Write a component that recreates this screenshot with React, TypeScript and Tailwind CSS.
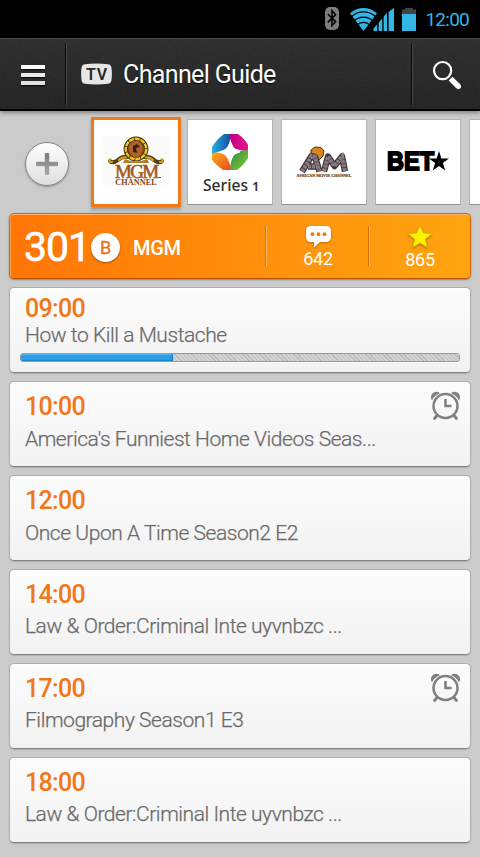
import type { ReactNode } from 'react'
import clsx from 'clsx'

type Program = {
  time: string
  title: string
  alarm?: boolean
  progress?: number
  raised?: boolean
}

const programs: Program[] = [
  { time: '09:00', title: 'How to Kill a Mustache', progress: 34.8 },
  { time: '10:00', title: "America's Funniest Home Videos Seas...", alarm: true },
  { time: '12:00', title: 'Once Upon A Time Season2 E2' },
  { time: '14:00', title: 'Law & Order:Criminal Inte uyvnbzc ...', raised: true },
  { time: '17:00', title: 'Filmography Season1 E3', alarm: true, raised: true },
  { time: '18:00', title: 'Law & Order:Criminal Inte uyvnbzc ...', raised: true },
]

function StatusBar() {
  return (
    <div className="flex h-[38px] shrink-0 items-start justify-end bg-black pr-[11px]">
      <svg className="mt-[7px] mr-[11px] h-[23px] w-[14px]" viewBox="0 0 14 23">
        <rect width="14" height="23" rx="5" fill="#7d7d7d" />
        <path d="M2.8 7 10.6 14.6 7 18.6V3.6L10.6 7.8 2.8 15.4" fill="none" stroke="#000" strokeWidth="1.5" />
      </svg>
      <svg className="mt-[7px] h-6 w-[45px]" viewBox="0 0 45 24" fill="#33b5e5">
        <path d="M13.5 24 0 6.2C8 -.9 19-.9 27 6.2Z" />
        <g fill="none" stroke="#000" strokeWidth="1.3">
          <path d="M1.5 9.6C8.5 3.4 18.5 3.4 25.5 9.6" />
          <path d="M4 13.8C9.5 8.8 17.5 8.8 23 13.8" />
          <path d="M6.8 18.2C10.5 14.4 16.5 14.4 20.2 18.2" />
        </g>
        <path d="M23.5 24v-2.4l3.6-4.1V24ZM28.6 24v-8.2l3.6-4.3V24ZM33.6 24V9.8l3.4-4V24ZM38.6 24V4.9L44 .8V24Z" />
      </svg>
      <svg className="mt-2 ml-[7px] h-[23px] w-[14px]" viewBox="0 0 14 23">
        <path d="M0 1.5h3V0h8v1.5h3V6H0Z" fill="#444" />
        <path d="M0 6h14v17H0Z" fill="#33b5e5" />
      </svg>
      <span className="mt-2 ml-[9px] text-[19px] leading-6 tracking-[-0.75px] text-[#33b5e5]">12:00</span>
    </div>
  )
}

function Header() {
  return (
    <header className="relative z-10 flex h-[73px] shrink-0 items-center border-t border-b-2 border-t-[#4a4a4a] border-b-black bg-gradient-to-b from-[#2b2b2b] to-[#202020] shadow-[0_2px_4px_rgba(0,0,0,0.35)]">
      <svg className="pointer-events-none absolute inset-0 h-full w-full opacity-[0.07]">
        <filter id="grain">
          <feTurbulence type="fractalNoise" baseFrequency="0.6" numOctaves="2" />
          <feColorMatrix type="saturate" values="0" />
        </filter>
        <rect width="100%" height="100%" filter="url(#grain)" />
      </svg>
      <div className="mt-0.5 flex w-[65px] flex-col gap-1 pl-[21px]">
        <span className="h-1 w-6 bg-white shadow-[0_1px_1px_#000]" />
        <span className="h-1 w-6 bg-[#ededed] shadow-[0_1px_1px_#000]" />
        <span className="h-1 w-6 bg-[#e2e2e2] shadow-[0_1px_1px_#000]" />
      </div>
      <div className="h-[62px] w-0.5 border-r border-[#454545] bg-black" />
      <svg className="ml-[14px] h-[22px] w-[31px]" viewBox="0 0 31 22">
        <path d="M4 1.2Q15.5-.4 27 1.2 30 1.6 30.4 4.5 31.4 11 30.4 17.5 30 20.4 27 20.8 15.5 22.4 4 20.8 1 20.4.6 17.5-.4 11 .6 4.5 1 1.6 4 1.2Z" fill="#e8e8e8" />
        <text x="15.9" y="16.6" textAnchor="middle" fontFamily="Roboto, sans-serif" fontSize="16" fontWeight="600" letterSpacing=".8" fill="#222">TV</text>
      </svg>
      <h1 className="mt-0.5 ml-[11px] text-[25px] leading-[30px] tracking-[-0.64px] text-white [text-shadow:0_1px_1px_#000]">Channel Guide</h1>
      <div className="ml-auto h-[62px] w-0.5 border-r border-[#454545] bg-black" />
      <div className="mt-0.5 w-[67px] pl-[19px]">
        <svg className="h-[30px] w-[30px]" viewBox="0 0 30 30" fill="none" stroke="#fff">
          <circle cx="10.6" cy="10.6" r="8.6" strokeWidth="2.2" />
          <path d="M18.6 18.6 26 26" strokeWidth="5.4" />
          <path d="M25.5 25.5 26.4 26.4" strokeWidth="5.2" strokeLinecap="round" />
        </svg>
      </div>
    </header>
  )
}

function MgmLogo() {
  return (
    <svg className="h-full w-full" viewBox="0 0 84 84">
      <defs>
        <linearGradient id="bronze" x2="0" y2="1">
          <stop offset="0" stopColor="#8a3510" />
          <stop offset="1" stopColor="#c98428" />
        </linearGradient>
      </defs>
      <rect x="9" y="16" width="67" height="50" fill="#fbfbfb" />
      <g fill="none" stroke="#57400f" strokeWidth="4" strokeLinecap="round">
        <path d="M34 37Q28 36 24 40 19 44 16 41" />
        <path d="M50 37Q56 36 60 40 65 44 68 41" />
      </g>
      <g fill="none" stroke="#dba526" strokeWidth="2" strokeLinecap="round">
        <path d="M34 37Q28 37 25 40" />
        <path d="M50 37Q56 37 59 40" />
        <path d="M16 39Q14 42 18 42" />
        <path d="M68 39Q70 42 66 42" />
      </g>
      <circle cx="42" cy="29" r="10.2" fill="#9a4a14" stroke="#3e3410" strokeWidth="4.4" />
      <circle cx="42" cy="29" r="10.2" fill="none" stroke="#eec52a" strokeWidth="2.4" strokeDasharray="5 .8" />
      <path d="M35 26Q38 20 44 21 49 23 48 31 47 37 41 38 35 35 35 26Z" fill="#b1602a" />
      <path d="M39 26 43 24 46 27 42 28 43 33 39 32Z" fill="#2c2418" />
      <path d="M31 39Q42 44 53 39L55 43H29Z" fill="#b47c26" />
      <text textAnchor="middle" fontFamily="Liberation Serif, serif" fill="url(#bronze)">
        <tspan x="42.3" y="57.7" fontSize="19" letterSpacing="-1.6" stroke="#a4581b" strokeWidth=".6">MGM</tspan>
        <tspan x="42" y="64.8" fontSize="8.2" letterSpacing=".1" fontWeight="700" fill="#8b4213">CHANNEL</tspan>
      </text>
      <path d="M65 57.5h2" stroke="#8b4213" />
    </svg>
  )
}

function SeriesLogo() {
  return (
    <svg className="h-full w-full" viewBox="0 0 84 84">
      <defs>
        <linearGradient id="blue"><stop stopColor="#27b2dd" /><stop offset="1" stopColor="#1452a0" /></linearGradient>
        <linearGradient id="pink"><stop stopColor="#b9007b" /><stop offset="1" stopColor="#ea1190" /></linearGradient>
        <linearGradient id="green" x2="1" y2="1"><stop stopColor="#2d8b3b" /><stop offset="1" stopColor="#8cc93c" /></linearGradient>
        <linearGradient id="orange" x2="1" y2="1"><stop stopColor="#ffad1a" /><stop offset="1" stopColor="#e84a1e" /></linearGradient>
      </defs>
      <path d="M36 14H42Q43 24 38 29.5 31 31 24 34V27Q29 19 36 14Z" fill="url(#blue)" />
      <path d="M41 14H50Q57 19 60 25V31Q52 31 46 28 42 21 41 14Z" fill="url(#pink)" />
      <path d="M60 30V38Q56 45 49 50H42Q42 42 46 35 51 30 60 30Z" fill="url(#green)" />
      <path d="M24 33Q33 31 38 36 42 42 43 50H35Q28 45 24 40Z" fill="url(#orange)" />
      <path d="M42 22Q43 30 52 32 43 34 42 42 40 34 32 32 40 30 42 22Z" fill="#fff" stroke="#fff" strokeWidth="1" />
      <text x="15" y="70.5" textLength="45" lengthAdjust="spacingAndGlyphs" fontFamily="Noto Sans, sans-serif" fontSize="17" fontWeight="500" fill="#2f2f2f">Series</text>
      <text x="64" y="70.5" fontFamily="Noto Sans, sans-serif" fontSize="13" fontWeight="600" fill="#2f2f2f">1</text>
    </svg>
  )
}

function AmLogo() {
  return (
    <svg className="h-full w-full" viewBox="0 0 84 84">
      <path d="M29 30 33 27 39 27.5 42 31 41 36 37 40 34 36 29 35Z" fill="#d8851d" stroke="#4b3014" strokeWidth="1" />
      <g fill="none" stroke="#3f353a" strokeWidth="6.4" strokeLinejoin="round">
        <path d="M20 51.5 29.5 36 33 37 37.5 51.5M26 46.5H35" />
        <path d="M42 51.5 46 36.5 52.5 46 60 36.5 63 51.5" />
      </g>
      <g fill="none" stroke="#86787f" strokeWidth="4.2" strokeDasharray="3.2 .7">
        <path d="M20 51.5 29.5 36 33 37 37.5 51.5M26 46.5H35" />
        <path d="M42 51.5 46 36.5 52.5 46 60 36.5 63 51.5" />
      </g>
      <text x="14.5" y="57" textLength="55" lengthAdjust="spacingAndGlyphs" fontFamily="Liberation Serif, serif" fontSize="4.2" fontWeight="700" fill="#6b4420" stroke="#6b4420" strokeWidth=".2">AFRICAN MOVIE CHANNEL</text>
    </svg>
  )
}

function BetLogo() {
  return (
    <svg className="h-full w-full" viewBox="0 0 84 84">
      <text x="11" y="50" textLength="47" lengthAdjust="spacingAndGlyphs" fontFamily="Liberation Sans, sans-serif" fontSize="25.5" fontWeight="700" fill="#000" stroke="#000" strokeWidth="1.8">BET</text>
      <path d="m63 31 2.4 7.4h7.6l-6.1 4.6 2.3 7.4-6.2-4.4-6.2 4.4 2.3-7.4-6.1-4.6h7.6Z" />
    </svg>
  )
}

function ChannelTile({ active, children }: { active?: boolean; children?: ReactNode }) {
  return (
    <div
      className={clsx(
        'shrink-0 bg-white',
        active
          ? 'mr-1.5 h-[90px] w-[90px] border-[3px] border-[#ef7a1a] shadow-[0_3px_3px_rgba(0,0,0,0.22)]'
          : 'mt-0.5 mr-2 h-[86px] w-[86px] border border-[#b3b3b3] border-b-[#929292]',
      )}
    >
      {children}
    </div>
  )
}

function ChannelStrip() {
  return (
    <div className="flex h-[102px] shrink-0 overflow-hidden pt-1.5 pl-[25px]">
      <button className="mt-[25px] mr-[22px] flex h-11 w-11 shrink-0 items-center justify-center rounded-full border border-[#82858c] bg-gradient-to-b from-white to-[#dedede] shadow-[0_1px_2px_rgba(0,0,0,0.3)]">
        <svg className="h-[22px] w-[22px]" viewBox="0 0 22 22">
          <defs>
            <linearGradient id="plus" x2="0" y2="1">
              <stop stopColor="#7b7b7b" />
              <stop offset="1" stopColor="#a8a8a8" />
            </linearGradient>
          </defs>
          <path d="M9.6 0h2.8l.6.6V9h8.4l.6.6v2.8l-.6.6H13v8.4l-.6.6H9.6L9 21.4V13H.6L0 12.4V9.6L.6 9H9V.6Z" fill="url(#plus)" stroke="url(#plus)" strokeWidth=".4" />
        </svg>
      </button>
      <ChannelTile active><MgmLogo /></ChannelTile>
      <ChannelTile><SeriesLogo /></ChannelTile>
      <ChannelTile><AmLogo /></ChannelTile>
      <ChannelTile><BetLogo /></ChannelTile>
      <ChannelTile />
    </div>
  )
}

function ChannelBar() {
  return (
    <section className="mx-[9px] flex h-[66px] shrink-0 rounded-[5px] border border-[#d8660c] border-b-[#b85200] bg-gradient-to-r from-[#ff7506] to-[#ffa510] text-white shadow-[inset_0_1px_0_#ffb565,inset_1px_0_0_#ff9c48,0_1px_2px_rgba(0,0,0,0.35)]">
      <span className="mt-[9px] w-[67px] pl-[14px] text-[41px] leading-[48px] tracking-[-1px] [-webkit-text-stroke:0.6px_white]">301</span>
      <span className="mt-[19px] ml-[14px] flex h-[29px] w-[29px] items-center justify-center rounded-full bg-white pt-px text-[18px] leading-none text-[#e8701a] shadow-[0_1px_2px_rgba(0,0,0,0.4)] [-webkit-text-stroke:0.3px_#e8701a]">B</span>
      <span className="mt-[22px] ml-[13px] text-[20px] leading-6 font-medium tracking-[-0.3px]">MGM</span>
      <div className="mt-3 ml-auto h-10 w-[103px] border-l border-[#e56a0b] shadow-[inset_1px_0_0_#ffba68]">
        <div className="flex flex-col items-center pl-0.5">
          <svg className="h-[22px] w-[25px] drop-shadow-[0_1px_1px_rgba(150,70,0,0.6)]" viewBox="0 0 25 22">
            <path d="M5 0H20Q25 0 25 5V11Q25 16 20 16H14L8 21.5V16H5Q0 16 0 11V5Q0 0 5 0Z" fill="#fff" />
            <g fill="#e47a1c"><circle cx="6.5" cy="8.2" r="1.9" /><circle cx="12.5" cy="8.2" r="1.9" /><circle cx="18.5" cy="8.2" r="1.9" /></g>
          </svg>
          <span className="text-[18px] leading-[22px] tracking-[-0.3px]">642</span>
        </div>
      </div>
      <div className="mt-3 h-10 w-[102px] border-l border-[#e56a0b] shadow-[inset_1px_0_0_#ffba68]">
        <div className="-mt-0.5 flex flex-col items-center pl-px">
          <svg className="h-[25px] w-[26px] drop-shadow-[0_1px_1px_rgba(120,70,0,0.6)]" viewBox="0 0 26 25">
            <path d="m13 1 3.3 8 8.7.6-6.7 5.6 2.1 8.4L13 19l-7.4 4.6 2.1-8.4L1 9.6 9.7 9Z" fill="#fff200" stroke="#d3b400" strokeWidth=".8" />
          </svg>
          <span className="text-[18px] leading-[22px] tracking-[-0.3px]">865</span>
        </div>
      </div>
    </section>
  )
}

function AlarmIcon() {
  return (
    <svg className="absolute top-[9px] right-[9px] h-[30px] w-[31px]" viewBox="0 0 31 30" fill="none" stroke="#808080">
      <circle cx="15.5" cy="15" r="12" strokeWidth="2.5" />
      <path d="M15.5 8V15H21.5" strokeWidth="2.6" />
      <path d="M7 24.5 4.5 27.5M24 24.5 26.5 27.5" strokeWidth="2.8" strokeLinecap="round" />
      <path d="M1.3 8.5Q0 3.5 4 1.3 7.5-.2 10 2.2 4.5 4.3 2.3 9ZM29.7 8.5Q31 3.5 27 1.3 23.5-.2 21 2.2 26.5 4.3 28.7 9Z" fill="#808080" stroke="none" />
    </svg>
  )
}

function ProgramCard({ time, title, alarm, progress, raised }: Program) {
  const playing = progress !== undefined
  return (
    <li className="relative h-[86px] rounded-[5px] border border-[#adadad] border-b-[#828282] bg-gradient-to-b from-[#fcfcfc] to-[#f2f2f2] shadow-[inset_0_1px_0_#fff,0_1px_1px_rgba(0,0,0,0.15)]">
      <p className={clsx('pl-[15px] text-[25px] leading-[30px] font-medium tracking-[-0.7px] text-[#f07818]', playing ? 'pt-1.5' : 'pt-2.5')}>
        {time}
      </p>
      <p className={clsx('pl-[15px] text-[21px] leading-6 font-light tracking-[-0.45px] text-[#6a6a6a] [-webkit-text-stroke:0.25px_#6a6a6a]', playing ? '-mt-px' : raised ? 'mt-1' : 'mt-[5px]')}>
        {title}
      </p>
      {playing && (
        <div className="mx-2.5 mt-1.5 h-[9px] overflow-hidden rounded-[3px] border border-[#989898] bg-[repeating-linear-gradient(45deg,#d2d2d2_0_2px,#bdbdbd_2px_3px)] shadow-[0_1px_0_#fff]">
          <div className="h-full border-r border-[#1377b5] bg-[#2b9de6] shadow-[inset_0_1px_0_#55b8f3,inset_0_-1px_0_#1c86c9]" style={{ width: `${progress}%` }} />
        </div>
      )}
      {alarm && <AlarmIcon />}
    </li>
  )
}

export default function App() {
  return (
    <div className="flex h-[857px] w-[480px] flex-col overflow-hidden bg-[#cbcbcb] font-['Roboto',sans-serif]">
      <StatusBar />
      <Header />
      <ChannelStrip />
      <ChannelBar />
      <ul className="mx-[9px] mt-2 flex flex-col gap-2">
        {programs.map((program) => (
          <ProgramCard key={program.time} {...program} />
        ))}
      </ul>
    </div>
  )
}
